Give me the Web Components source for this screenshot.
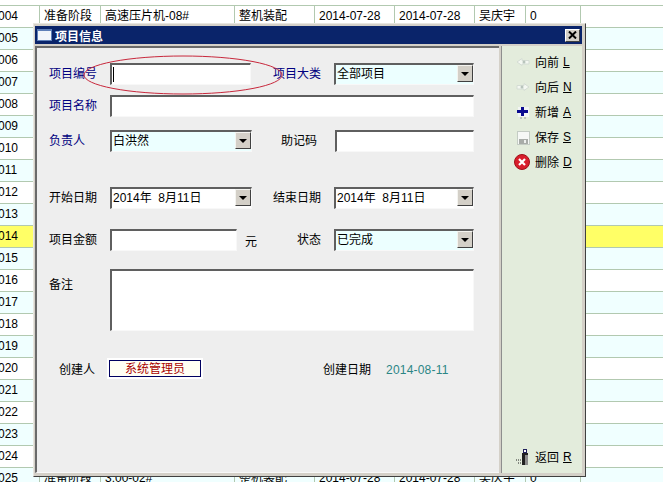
<!DOCTYPE html>
<html lang="zh">
<head>
<meta charset="utf-8">
<title>项目信息</title>
<style>
    html, body { margin: 0; height: 100%; overflow: hidden; background: #fff; }
    body { font: 12px "Liberation Sans", "Noto Sans CJK SC", sans-serif; color: #000; position: relative; }
</style>
</head>
<body>
<data-grid></data-grid>
<item-dialog></item-dialog>

<script>
(() => {

    const define = (name, css, html, setup) => {
        window.customElements.define(name, class extends HTMLElement {
            constructor() {
                super();
                this.attachShadow({mode: 'open'});
                this.shadowRoot.innerHTML = `<style>${css}</style>${html}`;
            }
            connectedCallback() {
                if (setup) setup(this);
            }
        });
    };

    // background table
    const COLS = '40px 61px 134px 80px 80px 80px 51px 55px 82px';
    const cellsFor = (id) => {
        if (id === '004') return ['004', '准备阶段', '高速压片机-08#', '整机装配', '2014-07-28', '2014-07-28', '吴庆宇', '0', ''];
        if (id === '025') return ['025', '准备阶段', '3:00-02#', '整机装配', '2014-07-28', '2014-07-28', '吴庆宇', '0', ''];
        return [id, '', '', '', '', '', '', '', ''];
    };

    define('data-grid', `
        :host { display: block; }
        .row { display: grid; grid-template-columns: ${COLS}; height: 22px; box-sizing: border-box; border-bottom: 1px solid #b2c9b0; line-height: 21px; }
        .row.top { height: 6px; }
        .row.alt { background: #f0ffff; }
        .row.sel { background: #ffff66; }
        .row span { border-right: 1px solid #b2c9b0; padding-left: 4px; white-space: nowrap; overflow: hidden; }
        .row span:first-child { padding-left: 0; text-indent: -2px; }
        .row span:last-child { border-right: 0; }
    `, '<div class="row top"></div><div id="rows"></div>', (el) => {
        const rows = el.shadowRoot.querySelector('#rows');
        for (let n = 4; n <= 25; n++) {
            const id = String(n).padStart(3, '0');
            const row = document.createElement('div');
            row.className = 'row';
            if (n === 14) row.classList.add('sel');
            else if (n % 2) row.classList.add('alt');
            cellsFor(id).forEach(text => {
                const cell = document.createElement('span');
                cell.textContent = text;
                row.appendChild(cell);
            });
            rows.appendChild(row);
        }
    });

    const BEVEL = `
        box-sizing: border-box;
        border-style: solid;
        border-width: 2px 1px 1px 2px;
        border-color: #5f5f5f #f8f8f8 #f8f8f8 #5f5f5f;
    `;

    define('win-input', `
        :host { display: block; height: 22px; ${BEVEL} background: #fff; position: relative; }
        .caret { display: none; position: absolute; left: 1px; top: 2px; width: 1px; height: 15px; background: #000; }
        :host([focused]) .caret { display: block; }
    `, '<div class="caret"></div>');

    define('win-combo', `
        :host { display: flex; height: 22px; ${BEVEL} background: #fff; }
        :host([tint]) { background: #ecffff; }
        .text { flex: 1; padding-left: 1px; line-height: 18px; white-space: pre; }
        button {
            width: 16px; height: 17px; margin: 0; padding: 0; background: #d4d0c8;
            border: 1px solid; border-color: #f4f4f0 #404040 #404040 #f4f4f0;
            display: flex; align-items: center; justify-content: center;
        }
        i { display: block; border: 4px solid transparent; border-top-color: #000; border-bottom: 0; }
    `, '<div class="text"><slot></slot></div><button tabindex="-1"><i></i></button>');

    define('form-label', `
        :host { display: block; height: 22px; line-height: 23px; white-space: nowrap; }
        :host([req]) { color: #000080; }
        :host([end]) { text-align: right; padding-right: 13px; }
    `, '<slot></slot>');

    define('form-row', `
        :host { display: grid; grid-template-columns: 61px 142px 82px 140px; }
    `, '<slot></slot>');

    define('side-button', `
        :host { display: flex; align-items: center; height: 25px; white-space: nowrap; }
        .ico { width: 18px; height: 18px; margin-right: 3px; flex: none; }
        u { margin-left: 4px; }
    `, '<div class="ico"><slot name="icon"></slot></div><slot></slot><u id="key"></u>', (el) => {
        el.shadowRoot.querySelector('#key').textContent = el.getAttribute('key');
    });

    define('item-dialog', `
        :host {
            position: absolute; left: 33px; top: 23px; width: 553px; height: 454px;
            box-sizing: border-box; display: flex; flex-direction: column;
            padding: 2px 3px 3px 1px; background: #d4d0c8;
            border: 1px solid; border-color: #e8e6e0 #404040 #404040 #e8e6e0;
        }
        .title {
            height: 18px; flex: none; background: #0a246a; color: #fff; font-weight: bold;
            display: flex; align-items: center; padding-left: 2px; margin-bottom: 2px;
        }
        .title svg { margin-right: 3px; }
        .close {
            margin-left: auto; margin-right: 2px; width: 15px; height: 13px; box-sizing: border-box;
            background: #d4d0c8; border: 1px solid; border-color: #fff #404040 #404040 #fff;
            display: flex; align-items: center; justify-content: center;
        }
        .close svg { margin: 0; }
        .body { flex: 1; display: flex; min-height: 0; }
        .form {
            width: 464px; box-sizing: border-box; padding: 15px 0 0 12px; background: #eee;
            border-style: solid; border-width: 2px 0 1px 2px; border-color: #6a6a6a #fff #f8f8f8 #6a6a6a;
            margin-right: 2px; position: relative;
        }
        .wide { grid-column: 2 / 5; }
        .r2 { margin-top: 10px; }
        .r3 { margin-top: 13px; }
        .r4 { margin-top: 35px; }
        .r5 { margin-top: 20px; }
        .r6 { margin-top: 18px; }
        .r7 { margin-top: 29px; height: 17px; }
        .k1 { width: 141px; }
        .amount { display: flex; align-items: center; gap: 8px; height: 22px; }
        .amount win-input { width: 127px; flex: none; }
        .r3 .right { padding-right: 17px; }
        .r3 win-input { margin-left: 1px; }
        .memo { height: 62px; }
        .memo-l { line-height: 32px; }
        .creator { padding-left: 10px; line-height: 20px; }
        .badge {
            width: 92px; height: 17px; box-sizing: border-box; margin-left: -1px; text-align: center;
            border: 1px solid #000060; outline: 2px solid #fff; background: #fffff4; color: #a80000; line-height: 16px;
        }
        .made { grid-column: 3 / 5; display: flex; gap: 15px; margin-left: 71px; line-height: 20px; }
        .date { color: #2b8585; letter-spacing: .2px; }
        .ring { position: absolute; left: 46px; top: 6px; pointer-events: none; }
        .side {
            flex: 1; background: #e3ecdc; display: flex; flex-direction: column;
            padding: 3px 0 4px 12px; border-left: 1px solid #8e8e8e;
        }
        .spacer { flex: 1; }
    `, `
        <div class="title">
            <svg width="15" height="12" viewBox="0 0 15 12"><rect width="15" height="12" fill="#5f7fb8"/><rect x="1" y="2" width="13" height="9" fill="#f2f5fa"/></svg>
            项目信息
            <div class="close"><svg width="9" height="8" viewBox="0 0 9 8"><path d="M1 0.5 8 7.5M8 0.5 1 7.5" stroke="#000" stroke-width="2" fill="none"/></svg></div>
        </div>
        <div class="body">
            <div class="form">
                <form-row>
                    <form-label req>项目编号</form-label>
                    <win-input class="k1" focused></win-input>
                    <form-label req end>项目大类</form-label>
                    <win-combo tint>全部项目</win-combo>
                </form-row>
                <form-row class="r2">
                    <form-label req>项目名称</form-label>
                    <win-input class="wide"></win-input>
                </form-row>
                <form-row class="r3">
                    <form-label req>负责人</form-label>
                    <win-combo tint>白洪然</win-combo>
                    <form-label class="right" end>助记码</form-label>
                    <win-input></win-input>
                </form-row>
                <form-row class="r4">
                    <form-label>开始日期</form-label>
                    <win-combo>2014年  8月11日</win-combo>
                    <form-label end>结束日期</form-label>
                    <win-combo>2014年  8月11日</win-combo>
                </form-row>
                <form-row class="r5">
                    <form-label>项目金额</form-label>
                    <div class="amount"><win-input></win-input><span>元</span></div>
                    <form-label end>状态</form-label>
                    <win-combo tint>已完成</win-combo>
                </form-row>
                <form-row class="r6">
                    <form-label class="memo-l">备注</form-label>
                    <win-input class="wide memo"></win-input>
                </form-row>
                <form-row class="r7">
                    <form-label class="creator">创建人</form-label>
                    <div class="badge">系统管理员</div>
                    <div class="made"><span>创建日期</span><span class="date">2014-08-11</span></div>
                </form-row>
                <svg class="ring" width="202" height="42" viewBox="0 0 202 42"><ellipse cx="100" cy="21" rx="99" ry="19" fill="none" stroke="#c8283c" stroke-width="1"/></svg>
            </div>
            <div class="side">
                <side-button key="L">
                    <svg slot="icon" width="18" height="18" viewBox="0 0 18 18"><path d="M3 9 8 5.5V7.5H15V11H8V12.5Z" fill="#f4f8f2" stroke="#d4dcd4"/><circle cx="10" cy="9" r="1.5" fill="#b8c4bc"/></svg>
                    向前
                </side-button>
                <side-button key="N">
                    <svg slot="icon" width="18" height="18" viewBox="0 0 18 18"><path d="M15 9 10 5.5V7.5H3V11H10V12.5Z" fill="#f4f8f2" stroke="#d4dcd4"/><circle cx="8" cy="9" r="1.5" fill="#b8c4bc"/></svg>
                    向后
                </side-button>
                <side-button key="A">
                    <svg slot="icon" width="18" height="18" viewBox="0 0 18 18"><rect x="4" y="4" width="11" height="10" fill="#f2f5f4"/><path d="M3 7H7V4H10V7H14V10H10V13H7V10H3Z" fill="#0a0a90"/><path d="M6 15H8M10 15H12" stroke="#9a9a9a"/></svg>
                    新增
                </side-button>
                <side-button key="S">
                    <svg slot="icon" width="18" height="18" viewBox="0 0 18 18"><rect x="3.5" y="3.5" width="12" height="13" fill="#f6f8f6" stroke="#c4ccc4"/><rect x="5" y="11" width="9" height="5" fill="#a8aca8"/><rect x="10" y="12" width="2" height="3" fill="#eef0ee"/></svg>
                    保存
                </side-button>
                <side-button key="D">
                    <svg slot="icon" width="18" height="18" viewBox="0 0 18 18"><circle cx="8" cy="9" r="7.5" fill="#d81e2c" stroke="#a01018"/><path d="M5 6 11 12M11 6 5 12" stroke="#fff" stroke-width="2.2"/></svg>
                    删除
                </side-button>
                <div class="spacer"></div>
                <side-button key="R">
                    <svg slot="icon" width="18" height="18" viewBox="0 0 18 18"><rect x="8" y="5" width="6" height="12" fill="#202020"/><rect x="11" y="7" width="3" height="10" fill="#8c8c8c"/><rect x="9.5" y="1.5" width="3" height="3" fill="#fff" stroke="#20205c"/><path d="M2 12H8M4 15H8" stroke="#202020" stroke-dasharray="1 1"/></svg>
                    返回
                </side-button>
            </div>
        </div>
    `);

})();
</script>
</body>
</html>
